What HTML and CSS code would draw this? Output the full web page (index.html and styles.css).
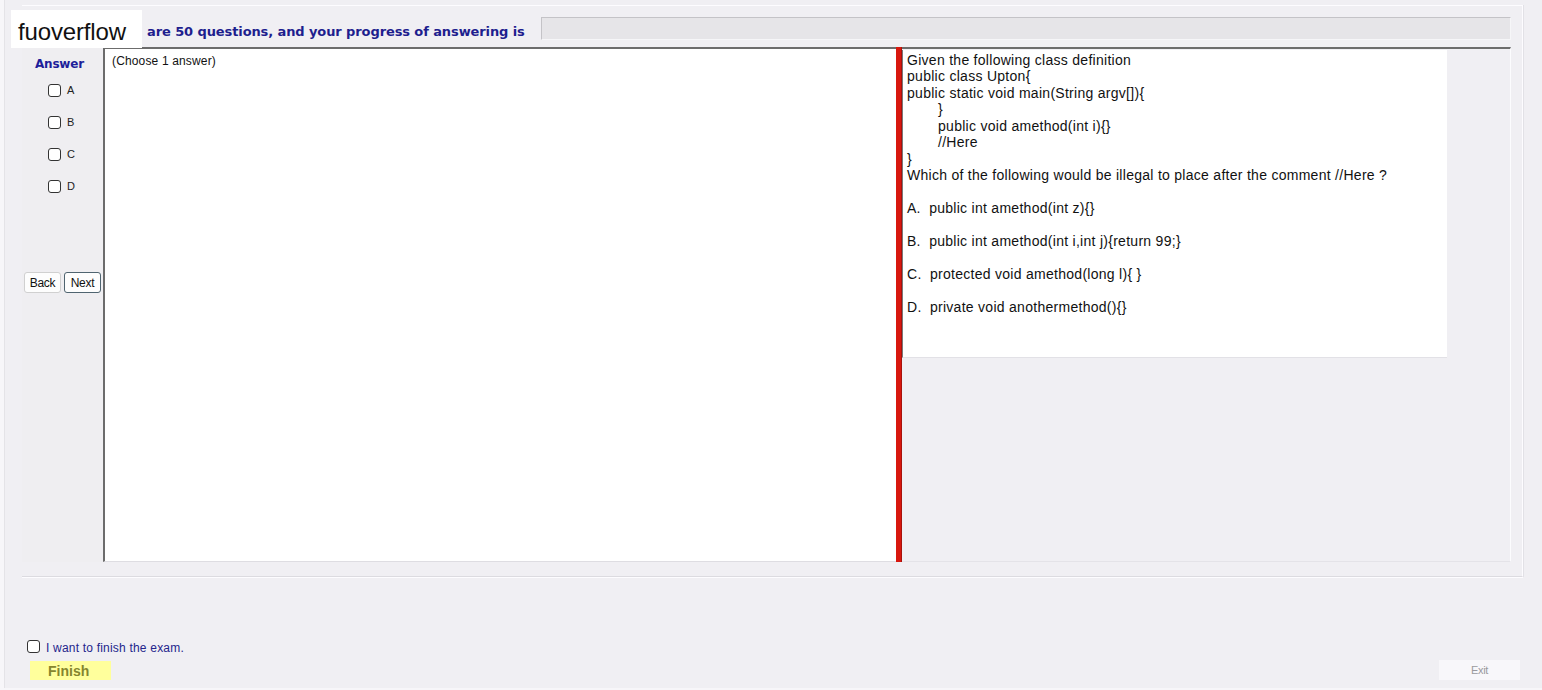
FILE: index.html
```html
<!DOCTYPE html>
<html lang="en">
<head>
<meta charset="utf-8">
<title>Exam</title>
<link rel="stylesheet" href="styles.css">
</head>
<body>
<div class="window">
  <div class="logo">fuoverflow</div>

  <div class="frame">
    <div class="header">
      <span class="headline">are 50 questions, and your progress of answering is</span>
      <div class="progress"></div>
    </div>

    <div class="workspace">
      <aside class="answers">
        <div class="answers-title">Answer</div>
        <label class="opt"><span class="box"></span>A</label>
        <label class="opt"><span class="box"></span>B</label>
        <label class="opt"><span class="box"></span>C</label>
        <label class="opt"><span class="box"></span>D</label>
        <div class="nav">
          <button class="btn">Back</button>
          <button class="btn btn-focus">Next</button>
        </div>
      </aside>

      <div class="question">(Choose 1 answer)</div>
      <div class="splitter"></div>

      <div class="pane">
        <div class="content">
          <div class="line">Given the following class definition</div>
          <div class="line">public class Upton{</div>
          <div class="line">public static void main(String argv[]){</div>
          <div class="line indent">}</div>
          <div class="line indent">public void amethod(int i){}</div>
          <div class="line indent">//Here</div>
          <div class="line">}</div>
          <div class="line">Which of the following would be illegal to place after the comment //Here ?</div>
          <div class="line choice">A.  public int amethod(int z){}</div>
          <div class="line choice">B.  public int amethod(int i,int j){return 99;}</div>
          <div class="line choice">C.  protected void amethod(long l){ }</div>
          <div class="line choice">D.  private void anothermethod(){}</div>
        </div>
      </div>
    </div>
  </div>

  <div class="footer">
    <div class="footer-left">
      <label class="confirm"><span class="box"></span>I want to finish the exam.</label>
      <button class="finish">Finish</button>
    </div>
    <button class="exit">Exit</button>
  </div>
</div>
</body>
</html>
```

FILE: styles.css
```css
* {
  box-sizing: border-box;
}

html, body {
  margin: 0;
  padding: 0;
}

body {
  background: #f7f6f9;
  font-family: "Liberation Sans", Arial, sans-serif;
  color: #000;
}

.window {
  position: relative;
  width: 1538px;
  height: 688px;
  margin-left: 4px;
  background: #f0eff3;
  border-left: 1px solid #e4e3e7;
  overflow: hidden;
}

/* brand tag sitting over the header */
.logo {
  position: absolute;
  left: 6px;
  top: 10px;
  width: 131px;
  height: 38px;
  background: #fff;
  font-size: 24px;
  line-height: 38px;
  padding: 3px 0 0 7px;
  letter-spacing: -0.15px;
  color: #111;
  z-index: 2;
}

/* group box holding header and workspace */
.frame {
  margin-left: 17px;
  margin-top: 5px;
  width: 1501px;
  border-top: 1px solid #fdfcff;
  border-right: 1px solid #fdfcff;
  border-bottom: 1px solid #dcdbe0;
  box-shadow: 1px 0 0 #e2e1e6, 0 1px 0 #fdfcff;
  padding: 11px 11px 14px 0;
}

.header {
  display: flex;
  align-items: center;
  height: 23px;
  padding-left: 125px;
}

.headline {
  font-family: "DejaVu Sans", Verdana, sans-serif;
  font-size: 13px;
  font-weight: bold;
  letter-spacing: -0.1px;
  color: #1e1e8e;
  white-space: nowrap;
  padding-top: 6px;
}

.progress {
  flex: 1;
  height: 23px;
  margin-left: 16px;
  background: #e6e5e8;
  border: 1px solid #c4c3c7;
  border-right-color: #f6f6f8;
  border-bottom-color: #f6f6f8;
}

.workspace {
  display: flex;
  height: 515px;
  margin-top: 7px;
}

.answers {
  width: 81px;
  flex: none;
  padding-top: 9px;
  background: #efeef1;
}

.answers-title {
  font-family: "DejaVu Sans", Verdana, sans-serif;
  font-size: 12px;
  font-weight: bold;
  letter-spacing: -0.2px;
  color: #1e1e9a;
  line-height: 16px;
  padding-left: 13px;
}

.opt {
  display: flex;
  align-items: center;
  height: 32px;
  padding-left: 26px;
  font-size: 11px;
  color: #222;
}

.opt:first-of-type {
  margin-top: 2px;
}

.box {
  display: inline-block;
  width: 13px;
  height: 13px;
  border: 1px solid #333;
  border-radius: 3px;
  background: #fff;
  margin-right: 6px;
  flex: none;
}

.nav {
  display: flex;
  gap: 3px;
  margin-top: 70px;
  padding-left: 2px;
}

.btn {
  width: 37px;
  height: 21px;
  padding: 0;
  font-family: "Liberation Sans", Arial, sans-serif;
  font-size: 12px;
  letter-spacing: -0.3px;
  color: #111;
  background: #fdfdfd;
  border: 1px solid #d0d0d0;
  border-radius: 3px;
}

.btn-focus {
  border-color: #4f6470;
}

.question {
  width: 793px;
  flex: none;
  background: #fff;
  border-left: 2px solid #6c6c6c;
  border-top: 2px solid #6c6c6c;
  border-bottom: 1px solid #dedde2;
  font-size: 12px;
  letter-spacing: 0.15px;
  padding: 5px 0 0 7px;
  color: #111;
}

.splitter {
  width: 6px;
  flex: none;
  background: #d8170e;
  border-right: 1px solid #a8120c;
}

.pane {
  flex: 1;
  border-top: 2px solid #6c6c6c;
  border-right: 1px solid #fcfcfe;
  border-bottom: 1px solid #e4e3e8;
  background: #f0eff3;
}

.content {
  width: 545px;
  height: 308px;
  margin-top: 1px;
  background: #fff;
  border-left: 1px solid #7a7a7a;
  border-bottom: 1px solid #e2e1e6;
  padding: 2px 0 0 4px;
  font-size: 14px;
  line-height: 16.45px;
  letter-spacing: 0.28px;
  color: #111;
}

.line {
  white-space: pre;
}

.indent {
  padding-left: 31px;
}

.choice {
  margin-top: 16.6px;
}

.footer {
  display: flex;
  justify-content: space-between;
  align-items: flex-end;
  margin-top: 64px;
  padding: 0 22px 0 22px;
}

.footer-left {
  display: flex;
  flex-direction: column;
  align-items: flex-start;
}

.confirm {
  display: flex;
  align-items: center;
  font-size: 12px;
  letter-spacing: 0.2px;
  color: #25258c;
  height: 14px;
}

.confirm .box {
  width: 13px;
  height: 13px;
  margin-right: 6px;
  margin-top: -3px;
}

.finish {
  margin-top: 6px;
  margin-left: 3px;
  width: 81px;
  height: 19px;
  padding: 1px 0 0 18px;
  text-align: left;
  background: #ffff9c;
  border: none;
  font-family: "Liberation Sans", Arial, sans-serif;
  font-size: 14px;
  font-weight: bold;
  color: #85852e;
}

.exit {
  width: 81px;
  height: 20px;
  margin-bottom: 0;
  background: #f8f7fa;
  border: none;
  font-family: "Liberation Sans", Arial, sans-serif;
  font-size: 11px;
  color: #9a9a9e;
  letter-spacing: -0.3px;
}
```
